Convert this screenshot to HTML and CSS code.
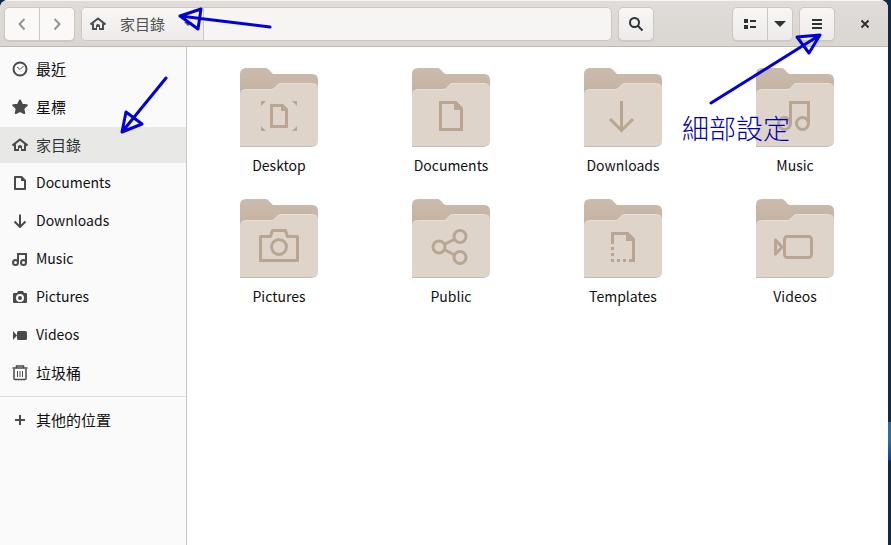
FILE: index.html
```html
<!DOCTYPE html>
<html lang="zh-Hant">
<head>
<meta charset="utf-8">
<meta name="viewport" content="width=device-width, initial-scale=1">
<title>家目錄</title>
<link rel="stylesheet" href="styles.css">
</head>
<body>
<svg class="defs" aria-hidden="true">
  <defs>
    <linearGradient id="back" x1="0" y1="0" x2="0" y2="1"><stop offset="0" stop-color="#cbbbac"/><stop offset="1" stop-color="#c3b19f"/></linearGradient>
    <symbol id="folder" viewBox="0 0 78 79">
      <path fill="url(#back)" d="M0 30V6Q0 0 6 0H25.500Q27 0 28 1L33 6H72Q78 6 78 12V30Z"/>
      <path fill="#c6bcb1" d="M0 70H78V72Q78 79 71 79H0Z"/>
      <path fill="#e8dfd6" d="M0 27Q0 21 6 21H31Q33 21 34 20L38 16Q39 15 41 15H72Q78 15 78 21V71Q78 78 71 78H0Z"/>
      <path fill="#ded4ca" d="M0 28Q0 22 6 22H31Q33 22 34 21L38 17Q39 16 41 16H72Q78 16 78 22V71Q78 78 71 78H0Z"/>
    </symbol>
    <symbol id="home" viewBox="0 0 16 16">
      <path fill="none" stroke="currentColor" stroke-width="2" d="M.5 8.500 8 2.500l7.500 6M3 7.500V13h3.500M13 7.500V13H9.500"/>
      <path fill="currentColor" stroke="none" d="M6 14V9.500Q6 8 8 8t2 1.500V14H9v-3H7v3z"/>
    </symbol>
  </defs>
</svg>
<div class="window">
  <header class="bar">
    <div class="group nav">
      <button class="btn" aria-label="Back"><svg viewBox="0 0 16 16"><path d="M10.500 3 5.500 8l5 5.500"/></svg></button>
      <button class="btn" aria-label="Forward"><svg viewBox="0 0 16 16"><path d="M5.500 3l5 5-5 5.500"/></svg></button>
    </div>
    <div class="path">
      <button class="crumb"><svg><use href="#home"/></svg><span>家目錄</span><svg class="caret" viewBox="0 0 16 16"><path d="M4 6h8l-4 4z" fill="currentColor"/></svg></button>
    </div>
    <button class="btn single" aria-label="Search"><svg viewBox="0 0 16 16"><circle cx="6.500" cy="6.500" r="4.500"/><path d="M10 10l4.500 4.500"/></svg></button>
    <div class="group view">
      <button class="btn" aria-label="List view"><svg viewBox="0 0 16 16"><path fill="currentColor" stroke="none" d="M2 3h4v4H2zM2 9h4v4H2zM8 4h6v2H8zM8 10h6v2H8z"/></svg></button>
      <button class="btn narrow" aria-label="View options"><svg viewBox="0 0 16 16"><path fill="currentColor" stroke="none" d="M2 5h12l-6 6z"/></svg></button>
    </div>
    <button class="btn single" aria-label="Menu"><svg viewBox="0 0 16 16"><path fill="currentColor" stroke="none" d="M3 3h10v2H3zM3 7h10v2H3zM3 11h10v2H3z"/></svg></button>
    <button class="close" aria-label="Close"><svg viewBox="0 0 16 16"><path d="M4.500 4.500l7 7M11.500 4.500l-7 7"/></svg></button>
  </header>
  <div class="body">
    <nav class="side">
      <a href="#"><svg viewBox="0 0 16 16"><circle cx="8" cy="8" r="6.500"/><path stroke-width="1" d="M5 6l3 2.500L11.500 5"/></svg>最近</a>
      <a href="#"><svg viewBox="0 0 16 16"><path fill="currentColor" stroke-width="2" stroke-linejoin="round" d="M8 1.500l2 4.200 4.700.6-3.400 3.200.9 4.600L8 11.800l-4.200 2.300.9-4.600-3.400-3.200L6 5.700z"/></svg>星標</a>
      <a href="#" class="current"><svg><use href="#home"/></svg>家目錄</a>
      <a href="#" class="latin"><svg viewBox="0 0 16 16"><path d="M3 3h6.500L13 6.500V15H3z" stroke-linejoin="round"/><path fill="currentColor" stroke="none" d="M9 3v4h4z"/></svg>Documents</a>
      <a href="#" class="latin"><svg viewBox="0 0 16 16"><path d="M8 2.500V15M2.500 9.500 8 15l5.500-5.500"/></svg>Downloads</a>
      <a href="#" class="latin"><svg viewBox="0 0 16 16"><path d="M6 12.500V4h8v8.500"/><circle cx="3.500" cy="12.500" r="2.500"/><circle cx="11.500" cy="12.500" r="2.500"/></svg>Music</a>
      <a href="#" class="latin"><svg viewBox="0 0 16 16"><path fill="currentColor" stroke="none" fill-rule="evenodd" d="M2 5h3l1-2h5l1 2h2q1 0 1 1v8q0 1-1 1H2q-1 0-1-1V6q0-1 1-1zm6 1a4 4 0 1 0 0 8 4 4 0 0 0 0-8z"/><circle cx="8" cy="10" r="2" fill="currentColor" stroke="none"/></svg>Pictures</a>
      <a href="#" class="latin"><svg viewBox="0 0 16 16"><path fill="currentColor" stroke="none" d="M1 5l4 4.500L1 14z"/><rect x="5" y="5" width="10" height="9" rx="1.500" fill="currentColor" stroke="none"/></svg>Videos</a>
      <a href="#"><svg viewBox="0 0 16 16"><path stroke-width="1.500" d="M.5 3h15M4.500 2.500V1h7v1.500M2 4v9.500q0 1 1 1h10q1 0 1-1V4"/><path stroke-width="1" d="M5.500 6v6M8 6v6M10.500 6v6"/></svg>垃圾桶</a>
      <hr>
      <a href="#"><svg viewBox="0 0 16 16"><path d="M8 3v10M3 8h10"/></svg>其他的位置</a>
    </nav>
    <main class="files">
      <figure><svg viewBox="0 0 78 79"><use href="#folder"/><path d="M31.500 37.500h11l4 4v17h-15z"/><path class="fill" d="M41 36v7h7l-6-7zM21 33h5l-5 5zM57 33h-5l5 5zM21 63h5l-5-5zM57 63h-5l5-5z"/></svg><figcaption>Desktop</figcaption></figure>
      <figure><svg viewBox="0 0 78 79"><use href="#folder"/><path d="M28.500 34.500h15l6 6v21h-21z"/><path class="fill" d="M42 33v9h9v-2l-7-7z"/></svg><figcaption>Documents</figcaption></figure>
      <figure><svg viewBox="0 0 78 79"><use href="#folder"/><path d="M37.500 33v29M26 51l11.500 11.500L49 51"/></svg><figcaption>Downloads</figcaption></figure>
      <figure><svg viewBox="0 0 78 79"><use href="#folder"/><path d="M34.500 56V34.500h18V56"/><circle cx="28.500" cy="55.500" r="6"/><circle cx="46.500" cy="55.500" r="6"/></svg><figcaption>Music</figcaption></figure>
      <figure><svg viewBox="0 0 78 79"><use href="#folder"/><path stroke-linejoin="round" d="M20.500 37.500h10l2-6h13l2 6h10v24h-37z"/><circle cx="39" cy="48" r="7.500"/></svg><figcaption>Pictures</figcaption></figure>
      <figure><svg viewBox="0 0 78 79"><use href="#folder"/><circle cx="27" cy="48" r="6"/><circle cx="48" cy="37.500" r="6"/><circle cx="48" cy="58.500" r="6"/><path d="M32 45.500l11-5.500M32 50.500l11 5.500"/></svg><figcaption>Public</figcaption></figure>
      <figure><svg viewBox="0 0 78 79"><use href="#folder"/><path d="M28.500 45V34.500h15l6 6v21H45"/><path class="fill" d="M42 33v9h9v-2l-7-7zM27 48h3v3h-3zM27 54h3v3h-3zM27 60h3v3h-3zM33 60h3v3h-3zM39 60h3v3h-3z"/></svg><figcaption>Templates</figcaption></figure>
      <figure><svg viewBox="0 0 78 79"><use href="#folder"/><rect x="28.500" y="37.500" width="27" height="21" rx="3"/><path stroke-linejoin="round" d="M19.500 41v14l6.500-7z"/></svg><figcaption>Videos</figcaption></figure>
    </main>
  </div>
</div>
<svg class="note note-left" viewBox="0 0 280 140" aria-hidden="true">
  <path d="M270 27 180 16l21-7-3 20-18-13M166 78l-44 54 4-20 16 12-20 8"/>
</svg>
<div class="note note-right">
  <svg viewBox="0 0 120 80" aria-hidden="true"><path d="M3 73 112 5 89 7l12 16 11-18"/></svg>
  <span>細部設定</span>
</div>
</body>
</html>
```

FILE: styles.css
```css
* { box-sizing: border-box; }

body {
  margin: 0;
  min-height: 100vh;
  display: flex;
  position: relative;
  overflow: hidden;
  padding-right: 3px;
  background: linear-gradient(#0b2c4b 0 422px, #2472a4 422px 440px, #0645a0 460px, #0a2c4a 461px);
  font: 15px/20px "Noto Sans CJK TC", "Noto Sans", sans-serif;
  color: #111;
}

.defs { position: absolute; width: 0; height: 0; }

button { font: inherit; color: #2e3436; padding: 0; }

svg { width: 16px; height: 16px; flex: none; fill: none; stroke: currentColor; stroke-width: 2; }

.window {
  flex: 1;
  display: flex;
  flex-direction: column;
  background: #fff;
  border-radius: 8px 8px 0 0;
  overflow: hidden;
}

.bar {
  display: flex;
  align-items: center;
  height: 47px;
  padding: 0 7px 0 4px;
  border-top: 1px solid #f6f5f4;
  border-bottom: 1px solid #bfb8b1;
  background: linear-gradient(#e0dcd9, #dad6d2);
}

.group { display: flex; }

.btn {
  display: grid;
  place-items: center;
  width: 36px;
  height: 34px;
  border: 1px solid #cdc7c2;
  border-radius: 5px;
  background: linear-gradient(#f8f7f6, #edebe9);
  box-shadow: 0 1px 1px #0001;
}

.group .btn:first-child { border-radius: 5px 0 0 5px; }
.group .btn:last-child { width: 35px; border-left: 0; border-radius: 0 5px 5px 0; }
.group .btn.narrow:last-child { width: 25px; }
.nav .btn { background: #faf9f8; color: #929595; }

.path {
  flex: 1;
  height: 34px;
  margin: 0 6px;
  border: 1px solid #cdc7c2;
  border-radius: 5px;
  background: #f6f5f3;
  overflow: hidden;
}

.crumb {
  display: flex;
  align-items: center;
  height: 32px;
  padding: 0 7px 0 8px;
  border: 0;
  border-right: 1px solid #cdc7c2;
  background: linear-gradient(#f8f7f6, #edebe9);
  color: #4c5052;
}

.crumb span { margin: 0 15px 0 14px; }
.caret { stroke: none; }

.view { margin: 0 6px 0 78px; }

.close {
  display: grid;
  place-items: center;
  width: 32px;
  height: 32px;
  margin-left: 14px;
  border: 0;
  background: none;
}

.body { flex: 1; display: flex; }

.side {
  display: flex;
  flex-direction: column;
  gap: 2px;
  width: 187px;
  padding-top: 4px;
  border-right: 1px solid #c9c5c1;
  background: #fafafa;
}

.side a {
  display: flex;
  align-items: center;
  gap: 8px;
  height: 36px;
  padding: 0 12px;
  color: #111;
  text-decoration: none;
}

.side .latin { padding-bottom: 2px; }
.side .latin, figcaption { font-size: 14px; }
.side svg { color: #4a4a4a; }
.side .current { background: #e8e8e7; color: #2e3436; }

.side hr { width: 100%; margin: 3px 0; border: 0; border-top: 1px solid #dcdcdc; }

.files {
  flex: 1;
  display: grid;
  grid-template-columns: repeat(4, 1fr);
  grid-auto-rows: 131px;
  padding: 21px 7px 0 6px;
}

figure { margin: 0; display: flex; flex-direction: column; align-items: center; gap: 8px; }

figure svg { width: 78px; height: 79px; stroke: #b9a692; stroke-width: 3; }
figure use { stroke: none; }
figure .fill { fill: #b9a692; stroke: none; }

/* Hand-drawn notes lying over the window */
.note { position: absolute; pointer-events: none; color: #0000d8; }
.note path { stroke-width: 3; stroke-linecap: round; stroke-linejoin: round; }
.note-left { top: 0; left: 0; width: 280px; height: 140px; }
.note-right { top: 30px; right: 63px; width: 120px; }
.note-right svg { display: block; width: 120px; height: 80px; }
.note-right span {
  position: absolute;
  top: 80px;
  right: 38px;
  font-size: 27px;
  font-weight: 300;
  line-height: 36px;
  color: #0000b0;
  white-space: nowrap;
}
```
